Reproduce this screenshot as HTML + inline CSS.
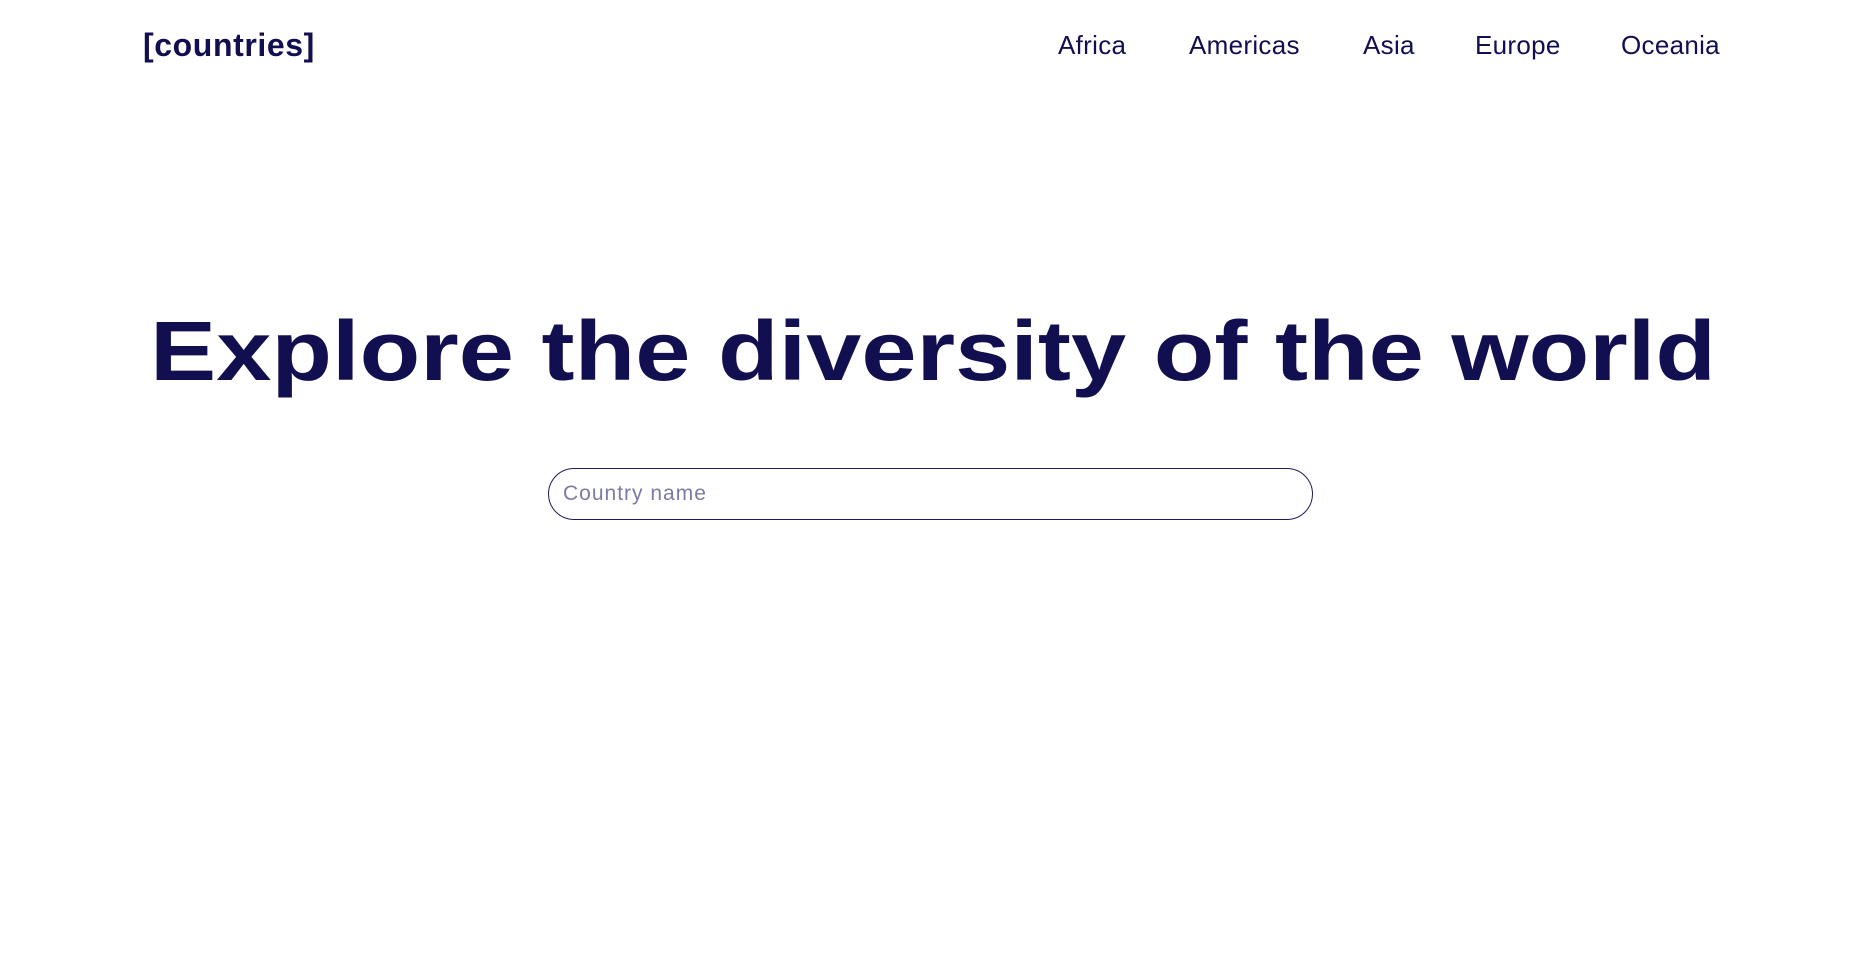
<!DOCTYPE html>
<html><head><meta charset="utf-8">
<style>
html,body{margin:0;padding:0;background:#fff;width:1870px;height:970px;overflow:hidden;}
body{font-family:"Liberation Sans",sans-serif;color:#120f50;position:relative;}
.logo{position:absolute;left:143px;top:27px;font-size:32px;font-weight:bold;letter-spacing:0.6px;}
.nav a{position:absolute;top:32px;font-size:26px;line-height:26px;letter-spacing:0.3px;color:#120f50;text-decoration:none;}
svg{position:absolute;left:0;top:0;}
.inp{position:absolute;left:548px;top:468px;width:765px;height:52px;box-sizing:border-box;border:1.5px solid #201c5c;border-radius:26px;}
.ph{position:absolute;left:563px;top:482px;font-size:21px;letter-spacing:1px;color:#7d7aa3;}
</style></head><body>
<div class="logo">[countries]</div>
<div class="nav">
<a style="left:1058px">Africa</a>
<a style="left:1189px">Americas</a>
<a style="left:1363px">Asia</a>
<a style="left:1475px">Europe</a>
<a style="left:1621px">Oceania</a>
</div>
<svg width="1870" height="500"><text x="150" y="380" font-family="Liberation Sans, sans-serif" font-weight="bold" font-size="84" fill="#120f50" textLength="1566" lengthAdjust="spacingAndGlyphs">Explore the diversity of the world</text></svg>
<div class="inp"></div>
<div class="ph">Country name</div>
</body></html>
